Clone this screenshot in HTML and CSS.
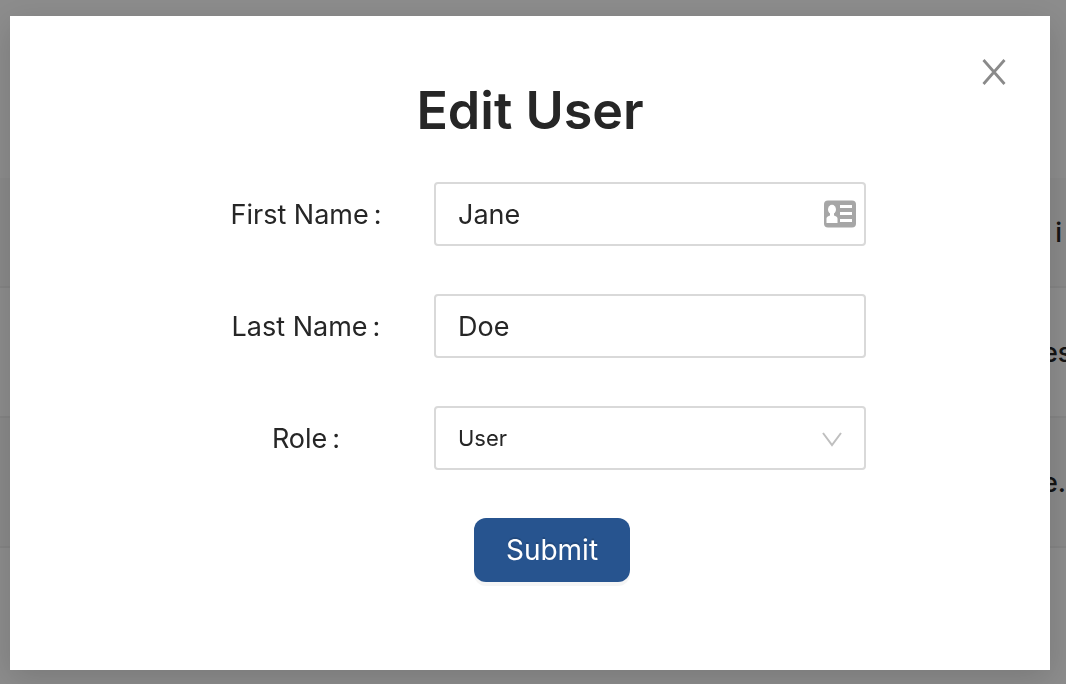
FILE: index.html
```html
<!DOCTYPE html>
<html lang="en">
<head>
  <meta charset="UTF-8">
  <meta name="viewport" content="width=device-width, initial-scale=1.0">
  <title>Edit User</title>
  <link rel="stylesheet" href="styles.css">
</head>
<body>

<!-- User table behind the modal -->
<table class="user-table">
  <thead>
    <tr><th></th><th class="last-col">i</th></tr>
  </thead>
  <tbody>
    <tr><td></td><td class="last-col">es</td></tr>
    <tr class="hovered"><td></td><td class="last-col">e.</td></tr>
  </tbody>
</table>

<div class="mask">
  <div class="modal" role="dialog" aria-labelledby="modalTitle">
    <button type="button" class="close-button" aria-label="Close">
      <svg width="24" height="26" viewBox="0 0 24 26" fill="none" stroke="#8a8a8a" stroke-width="2.8">
        <path d="M1.5 1 L22.5 25 M22.5 1 L1.5 25"/>
      </svg>
    </button>

    <h1 class="modal-title" id="modalTitle">Edit User</h1>

    <form class="user-form">
      <div class="form-item">
        <label for="firstName">First Name<span class="colon">:</span></label>
        <div class="control">
          <input type="text" id="firstName" value="Jane">
          <svg class="card-icon" width="32" height="28" viewBox="0 0 32 28">
            <rect width="32" height="27" y="0.5" rx="4" fill="#a6a6a6"/>
            <g fill="#fff">
              <ellipse cx="8" cy="9.5" rx="4" ry="4.7"/>
              <path d="M6 12h4v3.500l2.200 1c1 .5 1.300 1.200 1.300 2.300V23H2.500v-4.200c0-1.100.3-1.800 1.300-2.300l2.200-1z"/>
              <rect x="16" y="5" width="12" height="3"/>
              <rect x="16" y="12" width="12" height="3"/>
              <rect x="16" y="19" width="12" height="3"/>
            </g>
          </svg>
        </div>
      </div>

      <div class="form-item">
        <label for="lastName">Last Name<span class="colon">:</span></label>
        <div class="control">
          <input type="text" id="lastName" value="Doe">
        </div>
      </div>

      <div class="form-item">
        <label for="role">Role<span class="colon">:</span></label>
        <div class="control">
          <select id="role">
            <option>User</option>
            <option>Admin</option>
          </select>
          <svg class="arrow-icon" width="20" height="16" viewBox="0 0 20 16" fill="none" stroke="#bfbfbf" stroke-width="2">
            <path d="M1 1 L10 13 L19 1"/>
          </svg>
        </div>
      </div>

      <div class="form-actions">
        <button type="submit" class="submit-button">Submit</button>
      </div>
    </form>
  </div>
</div>

</body>
</html>
```
FILE: styles.css
```css
* {
  box-sizing: border-box;
}
body {
  margin: 0;
  overflow: hidden;
  background: #fff;
  color: #262626;
  font-family: Inter, "Liberation Sans", sans-serif;
  font-size: 27px;
}

/* User table */
.user-table {
  width: 100%;
  margin-top: 178px;
  table-layout: fixed;
  border-collapse: separate;
  border-spacing: 0;
}
.user-table th,
.user-table td {
  height: 130px;
  padding: 0;
  border-bottom: 2px solid #f0f0f0;
  font-weight: 500;
  text-align: left;
  white-space: nowrap;
}
.user-table th {
  height: 110px;
  padding-right: 4px;
  background: #fafafa;
  text-align: right;
}
.user-table .last-col {
  width: 24px;
}
.user-table .hovered td {
  background: #fafafa;
}

/* Modal */
.mask {
  position: fixed;
  inset: 0;
  padding: 16px 16px 14px 10px;
  background: rgba(0, 0, 0, 0.45);
}
.modal {
  position: relative;
  min-height: 100%;
  padding: 60px 40px 88px;
  background: #fff;
  box-shadow: 0 8px 32px rgba(0, 0, 0, 0.15);
}
.close-button {
  position: absolute;
  top: 32px;
  right: 32px;
  display: flex;
  align-items: center;
  justify-content: center;
  width: 48px;
  height: 48px;
  padding: 0;
  border: none;
  background: none;
  cursor: pointer;
}
.modal-title {
  margin: 0 0 36px;
  font-size: 52px;
  font-weight: 600;
  line-height: 70px;
  text-align: center;
}

/* Form */
.user-form {
  display: flex;
  flex-direction: column;
  gap: 48px;
  padding: 0 144px 0 128px;
}
.form-item {
  display: flex;
  align-items: center;
}
.form-item label {
  flex: 0 0 256px;
  text-align: center;
}
.colon {
  margin-left: 5px;
}
.control {
  position: relative;
  flex: 1;
}
.control input,
.control select {
  display: block;
  width: 100%;
  height: 64px;
  padding: 0 22px;
  border: 2px solid #d9d9d9;
  border-radius: 4px;
  background: #fff;
  color: #262626;
  font-family: inherit;
  font-size: 27px;
  appearance: none;
}
.control select {
  font-size: 22px;
}
.card-icon {
  position: absolute;
  top: 18px;
  right: 10px;
}
.arrow-icon {
  position: absolute;
  top: 26px;
  right: 24px;
  pointer-events: none;
}
.form-actions {
  padding-left: 60px;
  text-align: center;
}
.submit-button {
  height: 64px;
  padding: 0 32px;
  border: none;
  border-radius: 12px;
  background: #27548f;
  box-shadow: 0 4px 0 rgba(0, 0, 0, 0.04);
  color: #fff;
  font-family: inherit;
  font-size: 28px;
  text-shadow: 0 -2px 0 rgba(0, 0, 0, 0.12);
  cursor: pointer;
}
```
